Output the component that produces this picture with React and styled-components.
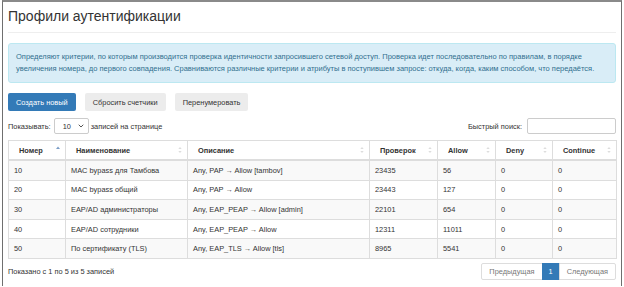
import React from "react";
import styled, { createGlobalStyle } from "styled-components";
import { ChevronDown } from "lucide-react";

const Global = createGlobalStyle`
  html, body {
    margin: 0;
    padding: 0;
    background: #fff;
  }
  body {
    font-family: "Liberation Sans", Arial, sans-serif;
    font-size: 7.4px;
    color: #333;
  }
`;

const Frame = styled.div`
  width: 620px;
  height: 286px;
  margin-left: 2px;
  border-top: 2px solid #8a8a8a;
  border-left: 1.5px solid #6f6f6f;
  border-right: 1.5px solid #6f6f6f;
  padding: 0 5px;
  box-sizing: border-box;
`;

const Title = styled.h1`
  margin: 0;
  padding-top: 4px;
  font-size: 14px;
  font-weight: 400;
  line-height: 20px;
  color: #333;
`;

const Rule = styled.div`
  height: 1px;
  background: #eee;
  margin: 6px 0 10px;
`;

const Alert = styled.div`
  background: #d9edf7;
  border: 1px solid #bce8f1;
  border-radius: 3px;
  color: #31708f;
  padding: 7px 7px;
  line-height: 12px;
  font-size: 7.5px;
`;

const Toolbar = styled.div`
  display: flex;
  gap: 9px;
  margin-top: 10px;
`;

const Button = styled.button`
  height: 18px;
  padding: 0 8px;
  border: none;
  border-radius: 2px;
  font-family: inherit;
  font-size: 7.4px;
  color: ${(p) => (p.$primary ? "#fff" : "#333")};
  background: ${(p) => (p.$primary ? "#337ab7" : "#ececec")};
`;

const Controls = styled.div`
  display: flex;
  justify-content: space-between;
  align-items: center;
  margin-top: 7px;
  height: 16px;
`;

const Inline = styled.label`
  display: flex;
  align-items: center;
  gap: 2px;
`;

const Select = styled.div`
  width: 35px;
  height: 16px;
  box-sizing: border-box;
  border: 1px solid #ccc;
  border-radius: 2px;
  display: flex;
  align-items: center;
  justify-content: space-between;
  padding: 0 3px 0 8px;
  margin-left: 1px;
`;

const Input = styled.div`
  width: 89px;
  height: 16px;
  box-sizing: border-box;
  border: 1px solid #ccc;
  border-radius: 2px;
  margin-left: 3px;
`;

const Table = styled.table`
  width: 608px;
  margin-top: 6px;
  border-collapse: collapse;
  table-layout: fixed;
  border: 1px solid #ddd;
`;

const Th = styled.th`
  height: 18px;
  padding: 0 0 0 10px;
  text-align: left;
  font-weight: 700;
  border: 1px solid #ddd;
  border-bottom: 2px solid #ddd;
  position: relative;
`;

const Td = styled.td`
  height: 18.6px;
  padding: 0 0 0 5px;
  border: 1px solid #ddd;
  white-space: nowrap;
  color: #333;
`;

const Tr = styled.tr`
  background: ${(p) => (p.$odd ? "#f9f9f9" : "#fff")};
`;

const SortMark = styled.svg`
  position: absolute;
  right: 5px;
  top: 50%;
  transform: translateY(-50%);
`;

const Footer = styled.div`
  display: flex;
  justify-content: space-between;
  align-items: center;
  margin-top: 4px;
`;

const Pager = styled.div`
  display: flex;
  height: 17px;
`;

const PageItem = styled.div`
  display: flex;
  align-items: center;
  padding: 0 ${(p) => (p.$active ? "6px" : "7px")};
  border: 1px solid ${(p) => (p.$active ? "#337ab7" : "#ddd")};
  margin-left: -1px;
  background: ${(p) => (p.$active ? "#337ab7" : "#fff")};
  color: ${(p) => (p.$active ? "#fff" : "#777")};
  border-radius: ${(p) => p.$radius || "0"};
`;

const Sort = ({ active }) => (
  <SortMark width="4" height="8" viewBox="0 0 4 8">
    {active ? (
      <path d="M0 3 L2 0.5 L4 3 Z" fill="#7a9cc6" />
    ) : (
      <>
        <path d="M0.3 3 L2 1 L3.7 3 Z" fill="#ddd" />
        <path d="M0.3 5 L2 7 L3.7 5 Z" fill="#ddd" />
      </>
    )}
  </SortMark>
);

const columns = [
  ["Номер", 57],
  ["Наименование", 122],
  ["Описание", 182],
  ["Проверок", 68],
  ["Allow", 58],
  ["Deny", 57],
  ["Continue", 64],
];

const rows = [
  ["10", "MAC bypass для Тамбова", "Any, PAP \u2192 Allow [tambov]", "23435", "56"],
  ["20", "MAC bypass общий", "Any, PAP \u2192 Allow", "23443", "127"],
  ["30", "EAP/AD администраторы", "Any, EAP_PEAP \u2192 Allow [admin]", "22101", "654"],
  ["40", "EAP/AD сотрудники", "Any, EAP_PEAP \u2192 Allow", "12311", "11011"],
  ["50", "По сертификату (TLS)", "Any, EAP_TLS \u2192 Allow [tls]", "8965", "5541"],
];

export default function App() {
  return (
    <>
      <Global />
      <Frame>
        <Title>Профили аутентификации</Title>
        <Rule />
        <Alert>
          Определяют критерии, по которым производится проверка идентичности запросившего сетевой доступ.
          Проверка идет последовательно по правилам, в порядке увеличения номера, до первого совпадения.
          Сравниваются различные критерии и атрибуты в поступившем запросе: откуда, когда, каким способом,
          что передаётся.
        </Alert>
        <Toolbar>
          <Button $primary>Создать новый</Button>
          <Button>Сбросить счетчики</Button>
          <Button>Перенумеровать</Button>
        </Toolbar>
        <Controls>
          <Inline>
            Показывать:
            <Select>
              <span>10</span>
              <ChevronDown size={8} strokeWidth={3} color="#555" />
            </Select>
            записей на странице
          </Inline>
          <Inline>
            Быстрый поиск:
            <Input />
          </Inline>
        </Controls>
        <Table>
          <colgroup>
            {columns.map(([name, w]) => (
              <col key={name} style={{ width: w }} />
            ))}
          </colgroup>
          <thead>
            <tr>
              {columns.map(([name], i) => (
                <Th key={name}>
                  {name}
                  <Sort active={i === 0} />
                </Th>
              ))}
            </tr>
          </thead>
          <tbody>
            {rows.map((r, i) => (
              <Tr key={r[0]} $odd={i % 2 === 0}>
                {r.map((c, j) => (
                  <Td key={j}>{c}</Td>
                ))}
                <Td>0</Td>
                <Td>0</Td>
              </Tr>
            ))}
          </tbody>
        </Table>
        <Footer>
          <span>Показано с 1 по 5 из 5 записей</span>
          <Pager>
            <PageItem $radius="2px 0 0 2px">Предыдущая</PageItem>
            <PageItem $active>1</PageItem>
            <PageItem $radius="0 2px 2px 0">Следующая</PageItem>
          </Pager>
        </Footer>
      </Frame>
    </>
  );
}
